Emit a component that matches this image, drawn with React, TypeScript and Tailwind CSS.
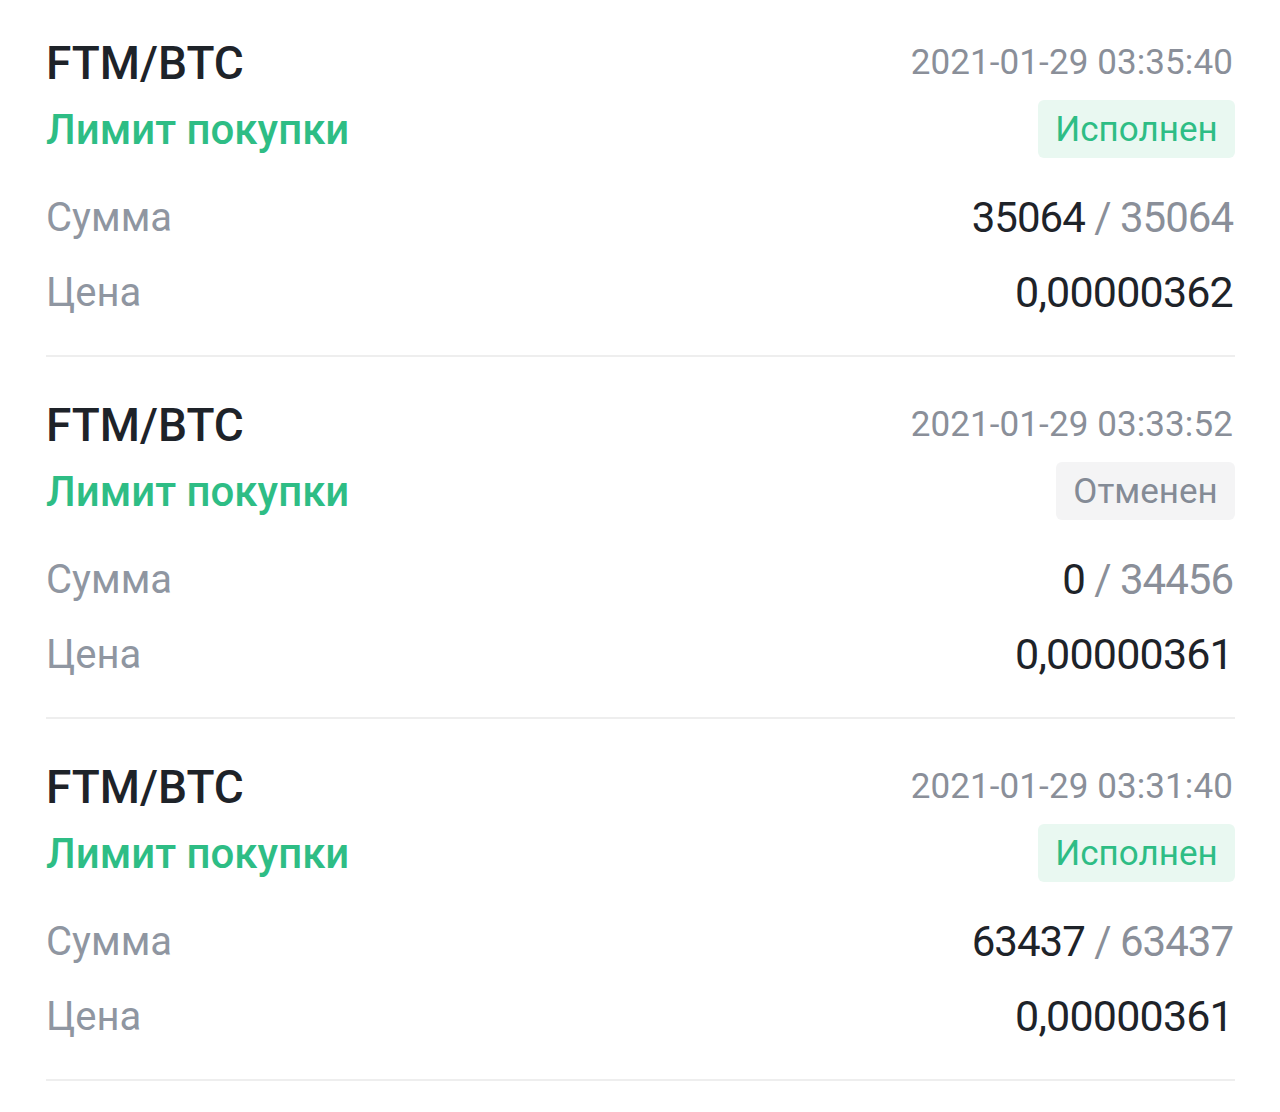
const orders = [
  { pair: 'FTM/BTC', side: 'Лимит покупки', time: '2021-01-29 03:35:40', status: 'Исполнен', filled: '35064', total: '35064', price: '0,00000362' },
  { pair: 'FTM/BTC', side: 'Лимит покупки', time: '2021-01-29 03:33:52', status: 'Отменен', filled: '0', total: '34456', price: '0,00000361' },
  { pair: 'FTM/BTC', side: 'Лимит покупки', time: '2021-01-29 03:31:40', status: 'Исполнен', filled: '63437', total: '63437', price: '0,00000361' },
];

const App = () => {
  return (
    <div className="min-h-screen bg-white font-['Roboto',sans-serif] pl-[46px] pr-[45px]">
      {orders.map((o, i) => (
        <div key={i} className={`border-b-2 border-[#eeeeee] pb-[25px] ${i === 0 ? 'pt-[35px]' : 'pt-[40px]'}`}>
          <div className="flex h-[56px] items-center justify-between">
            <span className="text-[46px] font-medium text-[#1e2329]">{o.pair}</span>
            <span className="pr-[2px] text-[35px] tracking-[0.1px] text-[#8a8f99]">{o.time}</span>
          </div>
          <div className="mt-[9px] flex h-[58px] items-center justify-between">
            <span className="text-[42px] font-medium text-[#2ebd85]">{o.side}</span>
            {o.status === 'Исполнен' ? (
              <span className="flex h-[58px] w-[197px] items-center justify-center rounded-md bg-[#e9f8f1] pt-[2px] text-[35px] text-[#2ebd85]">
                {o.status}
              </span>
            ) : (
              <span className="flex h-[58px] w-[179px] items-center justify-center rounded-md bg-[#f4f4f5] pt-[2px] text-[35px] text-[#848b96]">
                {o.status}
              </span>
            )}
          </div>
          <div className="mt-[22px] flex h-[75px] items-center justify-between">
            <span className="text-[40px] text-[#8f96a1]">Сумма</span>
            <span className="pr-[2px] text-[42px] tracking-[-1px]">
              <span className="text-[#1e2329]">{o.filled}</span>
              <span className="text-[#8a8f99]"> / {o.total}</span>
            </span>
          </div>
          <div className="flex h-[75px] items-center justify-between">
            <span className="text-[40px] text-[#8f96a1]">Цена</span>
            <span className="pr-[2px] text-[43px] tracking-[-0.8px] text-[#1e2329]">{o.price}</span>
          </div>
        </div>
      ))}
    </div>
  );
};

export default App;
